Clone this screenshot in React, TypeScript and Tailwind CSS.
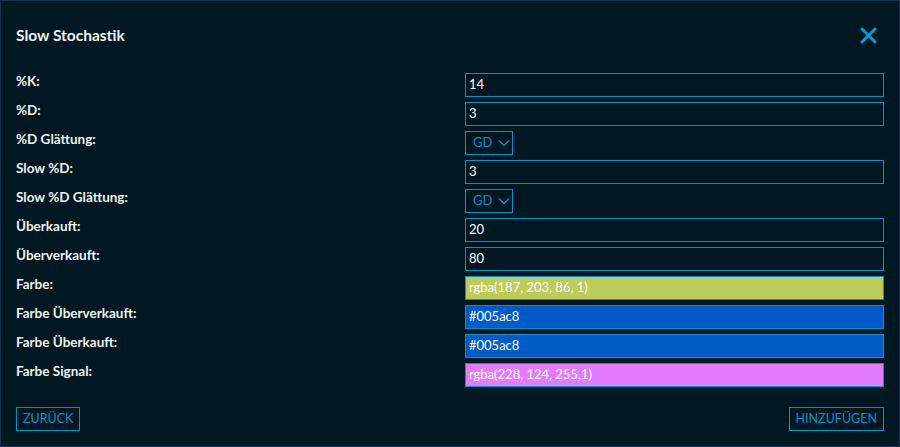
import React from 'react';

type Field =
  | { label: string; kind: 'text'; value: string }
  | { label: string; kind: 'select'; value: string }
  | { label: string; kind: 'color'; value: string; bg: string };

const fields: Field[] = [
  { label: '%K:', kind: 'text', value: '14' },
  { label: '%D:', kind: 'text', value: '3' },
  { label: '%D Glättung:', kind: 'select', value: 'GD' },
  { label: 'Slow %D:', kind: 'text', value: '3' },
  { label: 'Slow %D Glättung:', kind: 'select', value: 'GD' },
  { label: 'Überkauft:', kind: 'text', value: '20' },
  { label: 'Überverkauft:', kind: 'text', value: '80' },
  { label: 'Farbe:', kind: 'color', value: 'rgba(187, 203, 86, 1)', bg: 'bg-[#bdcb5a]' },
  { label: 'Farbe Überverkauft:', kind: 'color', value: '#005ac8', bg: 'bg-[#005ac8]' },
  { label: 'Farbe Überkauft:', kind: 'color', value: '#005ac8', bg: 'bg-[#005ac8]' },
  { label: 'Farbe Signal:', kind: 'color', value: 'rgba(228, 124, 255,1)', bg: 'bg-[#e27cfd]' },
];

const FieldInput = ({ field }: { field: Field }) => {
  if (field.kind === 'select') {
    return (
      <div className="flex h-6 w-12 items-center gap-[6px] border border-[#0a8fc6] pl-[7px] text-[13px] text-[#0a8fc6]">
        <span>{field.value}</span>
        <svg width="12" height="8" viewBox="0 0 12 8" fill="none" stroke="currentColor" strokeWidth="1.5">
          <path d="M1 1.5l5 5 5-5" />
        </svg>
      </div>
    );
  }
  const bg = field.kind === 'color' ? field.bg : 'bg-[#011722]';
  return (
    <div className={`flex h-6 items-center border border-[#0a8fc6] px-[3px] text-[13px] text-white ${bg}`}>
      {field.value}
    </div>
  );
};

const App = () => {
  return (
    <div
      className="flex h-[447px] w-[900px] flex-col border border-[#0c3649] bg-[#011722] px-[15px] text-[#eef2f4]"
      style={{ fontFamily: '"Source Sans Pro", Lato, "Noto Sans", sans-serif' }}
    >
      {/* Header */}
      <div className="flex items-center justify-between pt-[25px]">
        <h1 className="text-[15.5px] leading-[18px] font-bold">Slow Stochastik</h1>
        <button className="mr-[7px] text-[#0a9ad2]">
          <svg width="17" height="17" viewBox="0 0 17 17" fill="none" stroke="currentColor" strokeWidth="3" strokeLinecap="round">
            <path d="M2 2l13 13M15 2L2 15" />
          </svg>
        </button>
      </div>

      {/* Fields */}
      <div className="mt-[29px] flex flex-col gap-[5px]">
        {fields.map((f) => (
          <div key={f.label} className="grid grid-cols-[449px_1fr]">
            <div className="text-[13.5px] leading-4 font-bold">{f.label}</div>
            <div className="flex">
              <div className={f.kind === 'select' ? '' : 'w-full'}>
                <FieldInput field={f} />
              </div>
            </div>
          </div>
        ))}
      </div>

      {/* Footer */}
      <div className="mt-[20px] flex justify-between">
        <button className="h-6 border border-[#0a8fc6] px-[6px] text-[12.5px] text-[#0a8fc6]">ZURÜCK</button>
        <button className="h-6 border border-[#0a8fc6] px-[6px] text-[12.5px] text-[#0a8fc6]">HINZUFÜGEN</button>
      </div>
    </div>
  );
};

export default App;
